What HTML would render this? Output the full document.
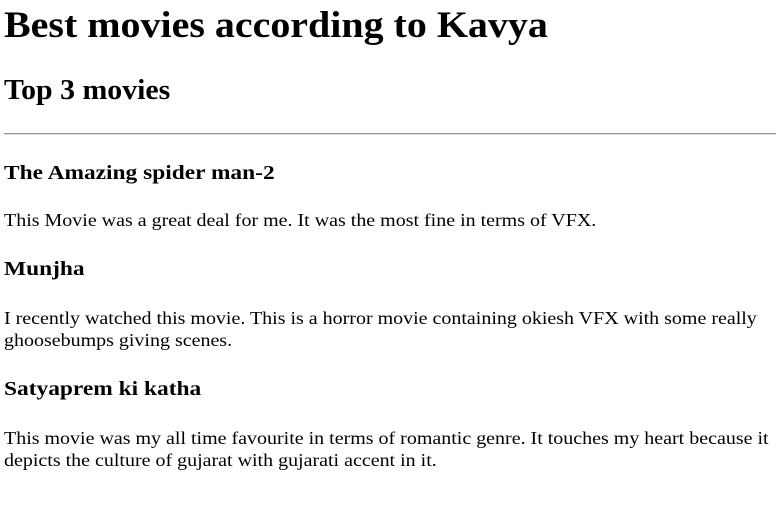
<!DOCTYPE html>
<html><head><meta charset="utf-8"><style>
body{margin:0;background:#fff;width:784px;height:507px;position:relative;font-family:"Liberation Serif",serif;color:#000;overflow:hidden}
div{position:absolute;left:4px;white-space:nowrap;transform-origin:0 0}
.h1{font-size:37px;font-weight:bold;line-height:37px;top:7px;transform:scaleX(1.08)}
.h2{font-size:28px;font-weight:bold;line-height:28px;top:77px;transform:scaleX(1.065)}
.h4{font-size:20px;font-weight:bold;line-height:20px;transform:scaleX(1.17)}
.p{font-size:18px;line-height:22px;width:697px;white-space:normal;transform:scaleX(1.11)}
hr{position:absolute;left:4px;top:133px;width:772px;margin:0;border:0;border-top:1px solid #999;border-bottom:1px solid #ddd;height:0}
</style></head><body>
<div class="h1">Best movies according to Kavya</div>
<div class="h2">Top 3 movies</div>
<hr>
<div class="h4" style="top:163px">The Amazing spider man-2</div>
<div class="p" style="top:209px">This Movie was a great deal for me. It was the most fine in terms of VFX.</div>
<div class="h4" style="top:259px">Munjha</div>
<div class="p" style="top:307px">I recently watched this movie. This is a horror movie containing okiesh VFX with some really ghoosebumps giving scenes.</div>
<div class="h4" style="top:379px">Satyaprem ki katha</div>
<div class="p" style="top:427px">This movie was my all time favourite in terms of romantic genre. It touches my heart because it depicts the culture of gujarat with gujarati accent in it.</div>
</body></html>
